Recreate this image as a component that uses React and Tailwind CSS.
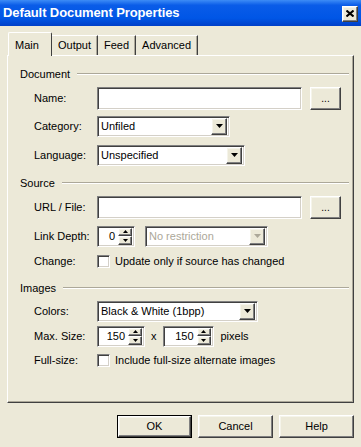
import React from "react";

const sunken = "bg-white border border-t-[#808080] border-l-[#808080] border-b-white border-r-white shadow-[inset_1px_1px_0_#404040,inset_-1px_-1px_0_#d4d0c8]";
const raised = "bg-[#ece9d8] border border-t-white border-l-white border-b-[#404040] border-r-[#404040] shadow-[inset_-1px_-1px_0_#808080,inset_1px_1px_0_#f5f4ea]";

function Arrow({ disabled }) {
    return (
        <svg width="7" height="4" viewBox="0 0 7 4">
            <path d="M0 0h7L3.5 4z" fill={disabled ? "#aca899" : "#000"} />
        </svg>
    );
}

function Select({ value, width, disabled }) {
    return (
        <div className={`${sunken} ${disabled ? "bg-[#ece9d8]" : ""} h-[21px] flex items-center`} style={{ width }}>
            <span className={`flex-1 pl-[3px] truncate ${disabled ? "text-[#aca899]" : ""}`}>{value}</span>
            <div className={`${raised} w-[16px] h-[17px] mr-[2px] flex items-center justify-center`}>
                <Arrow disabled={disabled} />
            </div>
        </div>
    );
}

function Spinner({ value, width }) {
    return (
        <div className={`${sunken} h-[21px] flex items-center`} style={{ width }}>
            <span className="flex-1 text-right pr-[3px]">{value}</span>
            <div className="flex flex-col w-[14px] h-[17px] mr-[2px]">
                <div className={`${raised} flex-1 flex items-center justify-center`}>
                    <svg width="5" height="3" viewBox="0 0 5 3"><path d="M0 3h5L2.5 0z" fill="#000" /></svg>
                </div>
                <div className={`${raised} flex-1 flex items-center justify-center`}>
                    <svg width="5" height="3" viewBox="0 0 5 3"><path d="M0 0h5L2.5 3z" fill="#000" /></svg>
                </div>
            </div>
        </div>
    );
}

function Check({ label }) {
    return (
        <div className="flex items-center">
            <div className={`${sunken} w-[13px] h-[13px]`} />
            <span className="ml-[5px]">{label}</span>
        </div>
    );
}

function Group({ title, mt }) {
    return (
        <div className={`flex items-center h-[14px] pl-[12px] pr-[4px] ${mt}`}>
            <span>{title}</span>
            <div className="flex-1 ml-[7px] border-t border-t-[#aca899] border-b border-b-white" />
        </div>
    );
}

function Row({ label, mt, children }) {
    return (
        <div className={`flex items-center h-[22px] pl-[26px] ${mt}`}>
            <span className="w-[63px] shrink-0">{label}</span>
            {children}
        </div>
    );
}

function Dots() {
    return (
        <div className={`${raised} w-[31px] h-[23px] ml-[8px] flex items-center justify-center text-[10px]`}>...</div>
    );
}

export default function App() {
    const tabs = ["Output", "Feed", "Advanced"];

    return (
        <div className="w-[361px] h-[447px] bg-[#ece9d8] text-[11px] text-black overflow-hidden flex flex-col" style={{ fontFamily: "'Liberation Sans', Arial, sans-serif" }}>
            {/* title bar */}
            <div className="h-[26px] shrink-0 flex items-center pl-[3px] pr-[3px] bg-[linear-gradient(#3d8cf6,#0a5ce8_20%,#0056e6_70%,#0040c8)]">
                <span className="flex-1 text-white font-bold text-[13px] tracking-[-0.1px]">Default Document Properties</span>
                <div className={`${raised} w-[16px] h-[16px] flex items-center justify-center mt-[1px]`}>
                    <svg width="8" height="7" viewBox="0 0 8 7">
                        <path d="M0.5 0.5L7.5 6.5M7.5 0.5L0.5 6.5" stroke="#000" strokeWidth="2" />
                    </svg>
                </div>
            </div>

            <div className="flex flex-col px-[7px] pt-[7px]">
                {/* tabs */}
                <div className="flex items-end h-[22px] pl-[1px] relative z-10">
                    <div className="h-[24px] -mb-[1px] px-[6px] pl-[6px] w-[44px] border border-b-0 border-t-white border-l-white border-r-[#404040] bg-[#ece9d8] rounded-t-[2px] flex items-start pt-[4px]">
                        Main
                    </div>
                    {tabs.map((t) => (
                        <div key={t} className="h-[20px] px-[6px] border-t border-t-white border-r border-r-[#404040] shadow-[inset_-1px_0_0_#aca899] flex items-center">
                            {t}
                        </div>
                    ))}
                </div>

                {/* panel */}
                <div className="h-[348px] border border-t-white border-l-white border-r-[#404040] border-b-[#404040] shadow-[inset_-1px_-1px_0_#aca899] flex flex-col pt-[11px]">
                    <Group title="Document" />
                    <Row label="Name:" mt="mt-[6px]">
                        <div className={`${sunken} w-[205px] h-[23px]`} />
                        <Dots />
                    </Row>
                    <Row label="Category:" mt="mt-[6px]">
                        <Select value="Unfiled" width={133} />
                    </Row>
                    <Row label="Language:" mt="mt-[7px]">
                        <Select value="Unspecified" width={148} />
                    </Row>

                    <Group title="Source" mt="mt-[10px]" />
                    <Row label="URL / File:" mt="mt-[6px]">
                        <div className={`${sunken} w-[205px] h-[23px]`} />
                        <Dots />
                    </Row>
                    <Row label="Link Depth:" mt="mt-[7px]">
                        <Spinner value="0" width={38} />
                        <div className="ml-[10px]">
                            <Select value="No restriction" width={123} disabled />
                        </div>
                    </Row>
                    <Row label="Change:" mt="mt-[3px]">
                        <Check label="Update only if source has changed" />
                    </Row>

                    <Group title="Images" mt="mt-[9px]" />
                    <Row label="Colors:" mt="mt-[5px]">
                        <Select value="Black & White (1bpp)" width={161} />
                    </Row>
                    <Row label="Max. Size:" mt="mt-[3px]">
                        <Spinner value="150" width={48} />
                        <span className="mx-[6px]">x</span>
                        <Spinner value="150" width={51} />
                        <span className="ml-[7px]">pixels</span>
                    </Row>
                    <Row label="Full-size:" mt="mt-[2px]">
                        <Check label="Include full-size alternate images" />
                    </Row>
                </div>

                {/* buttons */}
                <div className="flex justify-end gap-[6px] mt-[12px]">
                    <div className="w-[75px] h-[23px] border border-black">
                        <div className={`${raised} w-full h-full flex items-center justify-center`}>OK</div>
                    </div>
                    <div className={`${raised} w-[75px] h-[23px] flex items-center justify-center`}>Cancel</div>
                    <div className={`${raised} w-[75px] h-[23px] flex items-center justify-center`}>Help</div>
                </div>
            </div>
        </div>
    );
}
